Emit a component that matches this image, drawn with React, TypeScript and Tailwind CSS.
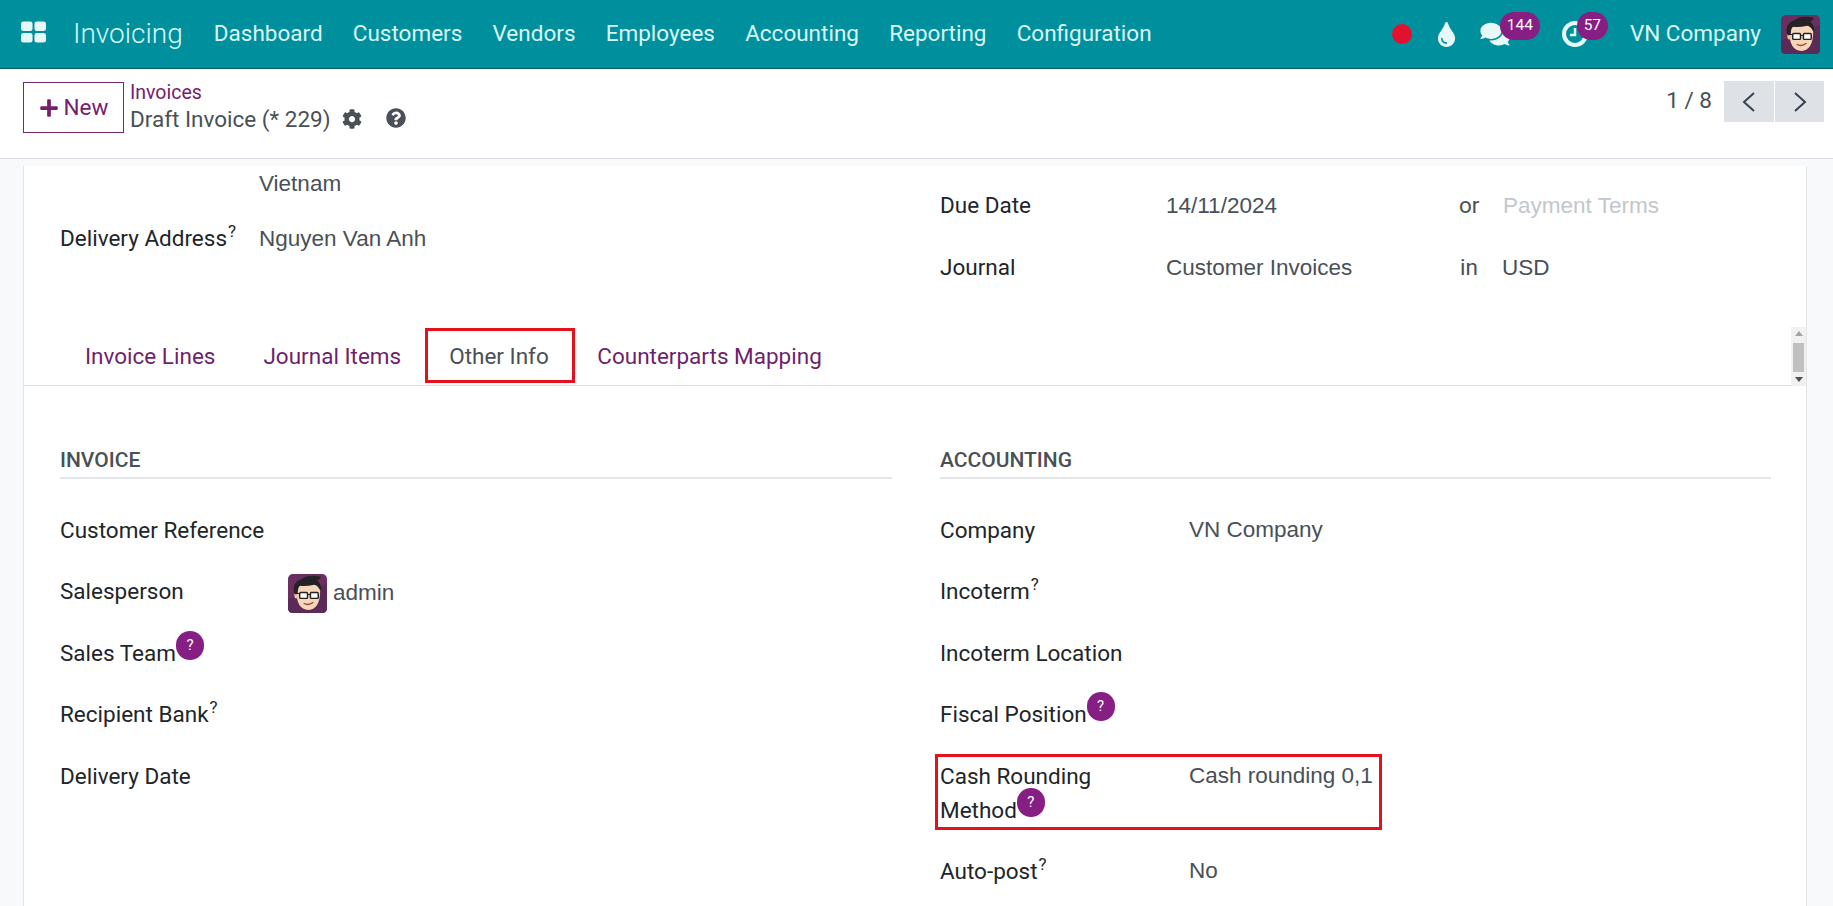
import React from "react";
import { FaCog, FaComments, FaPlus, FaQuestionCircle, FaTint } from "react-icons/fa";

function Avatar({ className }: { className: string }) {
  return (
    <svg viewBox="0 0 40 40" className={className}>
      <rect width="40" height="40" rx="5" fill="#6a2f60" />
      <path d="M0 26 L0 35 Q0 40 5 40 L35 40 Q40 40 40 35 L40 10 Z" fill="#5b2a56" />
      <path d="M9 17 Q8 36 21 37 Q33 36 33 17 Q30 9 20 9 Q11 10 9 17Z" fill="#f6d6b8" />
      <ellipse cx="8.5" cy="22" rx="2" ry="3" fill="#f0c6a4" />
      <path d="M6 19 Q4 8 14 5 Q22 0 34 3 Q32 6 30 7 Q35 11 34 18 Q32 12 27 11 Q18 13 12 12 Q10 14 10 20 L8 21Z" fill="#252226" />
      <rect x="12" y="19" width="8" height="6" rx="1" fill="#fff" stroke="#222" strokeWidth="1.5" />
      <rect x="23" y="19" width="8" height="6" rx="1" fill="#fff" stroke="#222" strokeWidth="1.5" />
      <path d="M20 21 L23 21 M8 20 L12 20" stroke="#222" strokeWidth="1.2" />
      <path d="M16 30 Q21 33 26 29" stroke="#9a4a3a" strokeWidth="1.3" fill="none" />
    </svg>
  );
}

function Hint() {
  return <sup className="text-[17px] ml-[1px] text-[#212529] relative top-[-9px] align-baseline">?</sup>;
}

function Bubble() {
  return (
    <span className="inline-flex w-[28px] h-[29px] rounded-full bg-[#861e84] text-white text-[15px] leading-none items-center justify-center align-top mt-[-5px]">
      ?
    </span>
  );
}

function Row({ label, value, hint, bubble }: { label: React.ReactNode; value?: React.ReactNode; hint?: boolean; bubble?: boolean }) {
  return (
    <div className="flex leading-[34px] pb-[27.5px]">
      <div className="w-[249px] shrink-0 text-[#212529]">
        {label}
        {hint && <Hint />}
        {bubble && <Bubble />}
      </div>
      {value && <div className="h-[34px] text-[#495057] [font-family:'Liberation_Sans',sans-serif] text-[22.5px]">{value}</div>}
    </div>
  );
}

function Tab({ children, active }: { children: React.ReactNode; active?: boolean }) {
  return (
    <div className={`px-[24px] flex items-center h-[56px] ${active ? "text-[#495057]" : "text-[#6f1f6d]"}`}>{children}</div>
  );
}

export default function App() {
  return (
    <div className="h-[906px] w-[1833px] overflow-hidden bg-[#f8f9fb] [font-family:Roboto,sans-serif] text-[22.5px] flex flex-col">
      <header className="h-[69px] shrink-0 bg-[#008f9d] border-b border-[#05606b] flex items-center text-[#d9f6f6]">
        <svg viewBox="0 0 26 22" className="w-[25px] h-[22px] ml-[21px] mt-[-4px]">
          <rect x="0" y="0" width="12" height="10" rx="2.5" fill="#e6f8f8" />
          <rect x="14" y="0" width="12" height="10" rx="2.5" fill="#e6f8f8" />
          <rect x="0" y="12" width="12" height="10" rx="2.5" fill="#e6f8f8" />
          <rect x="14" y="12" width="12" height="10" rx="2.5" fill="#e6f8f8" />
        </svg>
        <div className="text-[28px] ml-[27px] font-light">Invoicing</div>
        <nav className="flex gap-[30.2px] ml-[31px]">
          <span>Dashboard</span>
          <span>Customers</span>
          <span>Vendors</span>
          <span>Employees</span>
          <span>Accounting</span>
          <span>Reporting</span>
          <span>Configuration</span>
        </nav>
        <div className="ml-auto flex items-center">
          <span className="w-[20px] h-[20px] rounded-full bg-[#e3102f]" />
          <FaTint className="w-[19px] h-[25px] ml-[25px] text-[#e6f8f8]" />
          <div className="relative ml-[24px]">
            <FaComments className="w-[30px] h-[26px] text-[#e6f8f8]" />
            <span className="absolute left-[20px] top-[-9px] w-[40px] h-[28px] rounded-full bg-[#861e84] text-white text-[15.5px] flex items-center justify-center">144</span>
          </div>
          <div className="relative ml-[52px] w-[26px] h-[26px]">
            <svg viewBox="0 0 26 26" className="w-[26px] h-[26px]">
              <circle cx="13" cy="13" r="11" fill="none" stroke="#e6f8f8" strokeWidth="4" />
              <path d="M13 7 V14 H8" fill="none" stroke="#e6f8f8" strokeWidth="2.5" />
            </svg>
            <span className="absolute left-[15px] top-[-9px] w-[31px] h-[28px] rounded-full bg-[#861e84] text-white text-[15.5px] flex items-center justify-center">57</span>
          </div>
          <span className="ml-[42px]">VN Company</span>
          <Avatar className="w-[39px] h-[39px] ml-[20px] mr-[13px]" />
        </div>
      </header>

      <section className="h-[90px] shrink-0 bg-white border-b border-[#d8dce3] flex pl-[23px] pr-[9px] relative">
        <button className="mt-[13px] w-[101px] h-[51px] border border-[#74276f] text-[#74206f] flex items-center justify-center gap-[5px]">
          <FaPlus className="w-[20px] h-[20px]" />
          New
        </button>
        <div className="ml-[6px] mt-[11px]">
          <div className="text-[#74206f] text-[19.5px] leading-[26px]">Invoices</div>
          <div className="flex items-center text-[#495057] leading-[26px]">
            Draft Invoice (* 229)
            <FaCog className="w-[20px] h-[20px] ml-[11px]" />
            <FaQuestionCircle className="w-[20px] h-[20px] ml-[24px] mt-[-3px]" />
          </div>
        </div>
        <div className="ml-auto flex items-start mt-[12px]">
          <span className="text-[#495057] leading-[38px] mr-[12px]">1 / 8</span>
          <div className="flex gap-px">
            <div className="w-[50px] h-[41px] bg-[#dee2e6] flex items-center justify-center">
              <svg viewBox="0 0 14 22" className="w-[14px] h-[22px]"><path d="M12 2 L2 11 L12 20" fill="none" stroke="#374151" strokeWidth="2" /></svg>
            </div>
            <div className="w-[49px] h-[41px] bg-[#dee2e6] flex items-center justify-center">
              <svg viewBox="0 0 14 22" className="w-[14px] h-[22px]"><path d="M2 2 L12 11 L2 20" fill="none" stroke="#374151" strokeWidth="2" /></svg>
            </div>
          </div>
        </div>
      </section>

      <main className="ml-[23px] w-[1784px] mt-[7px] flex-1 bg-white border-x border-[#e2e5ea] flex flex-col">
        <div className="h-[162px] shrink-0 flex gap-[48px] px-[36px] pt-[1px]">
          <div className="w-[832px] shrink-0">
            <div className="pl-[199px] leading-[34px] text-[#495057] [font-family:'Liberation_Sans',sans-serif] text-[22.5px]">Vietnam</div>
            <div className="flex leading-[34px] mt-[21px]">
              <div className="w-[199px] text-[#212529] leading-[32px]">Delivery Address<Hint /></div>
              <div className="text-[#495057] [font-family:'Liberation_Sans',sans-serif] text-[22.5px]">Nguyen Van Anh</div>
            </div>
          </div>
          <div className="w-[831px] shrink-0 pt-[22px] leading-[34px]">
            <div className="flex">
              <div className="w-[226px] text-[#212529] leading-[32px]">Due Date</div>
              <div className="w-[293px] text-[#495057] [font-family:'Liberation_Sans',sans-serif] text-[22.5px]">14/11/2024</div>
              <div className="w-[44px] text-[#495057] leading-[32px]">or</div>
              <div className="text-[#c2c7cd] [font-family:'Liberation_Sans',sans-serif] text-[22.5px]">Payment Terms</div>
            </div>
            <div className="flex mt-[28px]">
              <div className="w-[226px] text-[#212529] leading-[32px]">Journal</div>
              <div className="w-[293px] text-[#495057] [font-family:'Liberation_Sans',sans-serif] text-[22.5px]">Customer Invoices</div>
              <div className="w-[43px] text-[#495057] pl-[1px] leading-[32px]">in</div>
              <div className="text-[#495057] [font-family:'Liberation_Sans',sans-serif] text-[22.5px]">USD</div>
            </div>
          </div>
        </div>

        <div className="h-[58px] shrink-0 border-b border-[#dde0e5] flex items-end pl-[37px] relative">
          <Tab>Invoice Lines</Tab>
          <Tab>Journal Items</Tab>
          <Tab active>Other Info</Tab>
          <div className="pl-[0.5px]"><Tab>Counterparts Mapping</Tab></div>
          <div className="absolute left-[401px] top-[0px] w-[150px] h-[55px] border-[3px] border-[#e5101c]" />
          <div className="absolute right-0 top-[-1px] w-[15px] h-[59px] bg-[#f1f1f1] flex flex-col items-center justify-between py-[4px]">
            <span className="w-0 h-0 border-x-[4px] border-x-transparent border-b-[5px] border-b-[#a3a3a3]" />
            <span className="w-[11px] h-[29px] bg-[#c0c0c0] mt-[2px]" />
            <span className="w-0 h-0 border-x-[4px] border-x-transparent border-t-[5px] border-t-[#505050]" />
          </div>
        </div>

        <div className="flex gap-[48px] px-[36px] pt-[57px]">
          <div className="w-[832px] shrink-0">
            <h3 className="text-[21px] leading-[34px] font-medium uppercase text-[#495057] border-b-2 border-[#e3e5e8] mb-[33.5px]">Invoice</h3>
            <Row label="Customer Reference" />
            <Row
              label="Salesperson"
              value={
                <span className="flex items-center gap-[6px] ml-[-21px] h-[38px]">
                  <Avatar className="w-[39px] h-[39px]" /> admin
                </span>
              }
            />
            <Row label="Sales Team" bubble />
            <Row label="Recipient Bank" hint />
            <Row label="Delivery Date" />
          </div>
          <div className="w-[831px] shrink-0">
            <h3 className="text-[21px] leading-[34px] font-medium uppercase text-[#495057] border-b-2 border-[#e3e5e8] mb-[33.5px]">Accounting</h3>
            <Row label="Company" value="VN Company" />
            <Row label="Incoterm" hint />
            <Row label="Incoterm Location" />
            <Row label="Fiscal Position" bubble />
            <div className="relative">
              <Row label={<span className="block w-[190px]">Cash Rounding Method<Bubble /></span>} value="Cash rounding 0,1" />
              <div className="absolute left-[-5px] top-[-5px] w-[447px] h-[76px] border-[3px] border-[#e5101c]" />
            </div>
            <Row label="Auto-post" hint value="No" />
          </div>
        </div>
      </main>
    </div>
  );
}
